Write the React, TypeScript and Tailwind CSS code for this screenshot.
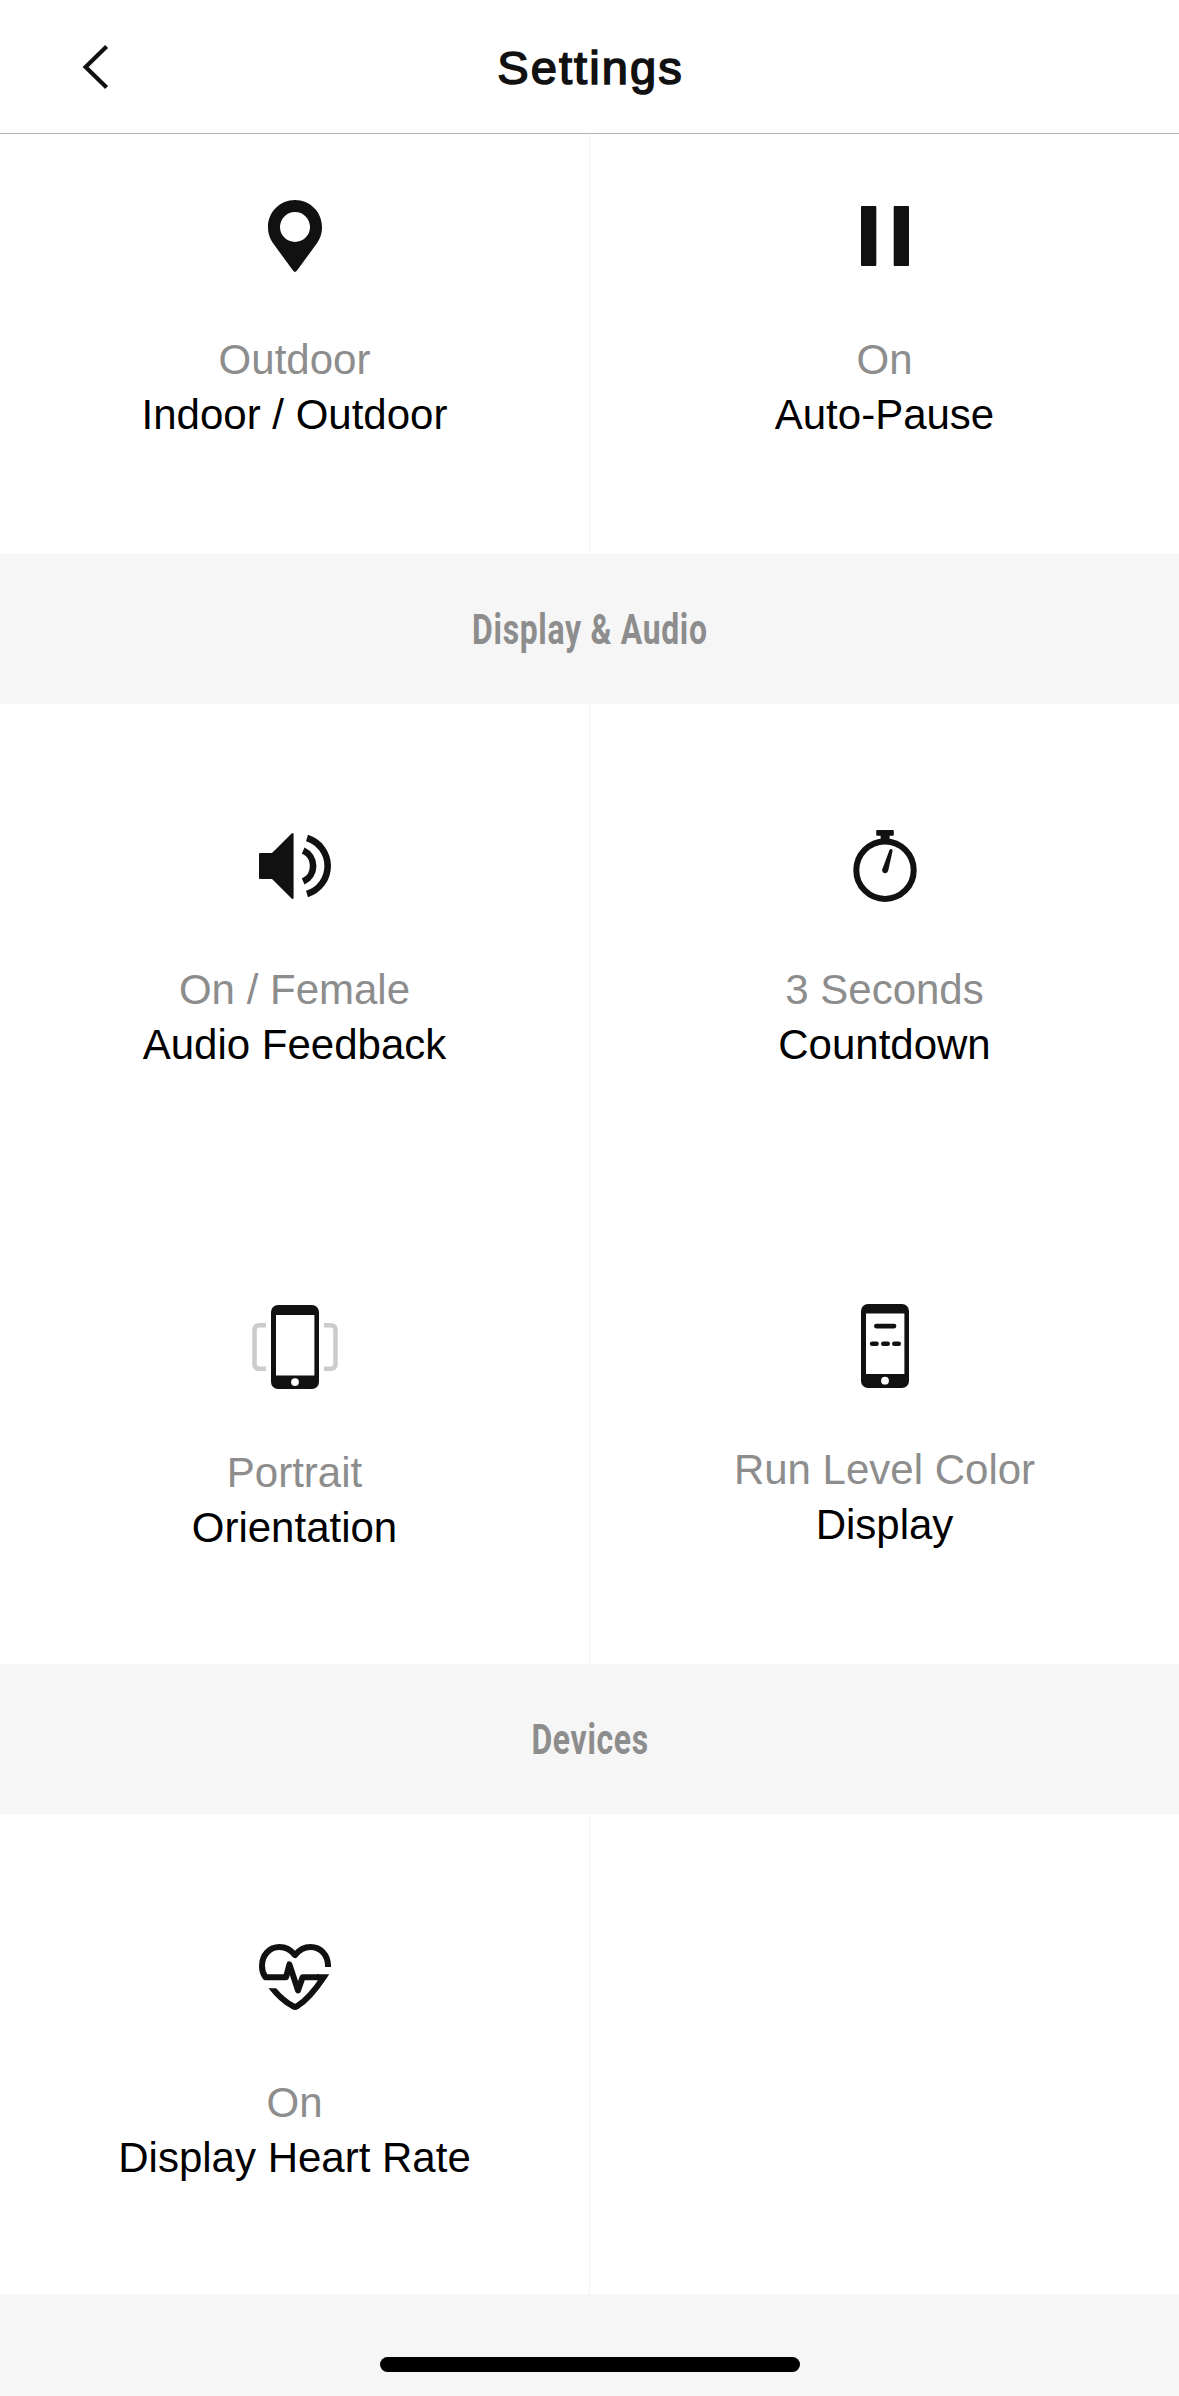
import type { ReactNode } from "react";

const INK = "#111111";

function PinIcon() {
  return (
    <svg width="54" height="72" viewBox="0 0 54 72" fill={INK}>
      <path
        fillRule="evenodd"
        d="M27 0C12 0 0 12 0 27C0 34 1.8 38.6 5.6 44L25 70.6Q27 73.2 29 70.6L48.4 44C52.2 38.6 54 34 54 27C54 12 42 0 27 0ZM27 12A15 15 0 1 1 27 42A15 15 0 1 1 27 12Z"
      />
    </svg>
  );
}

function PauseIcon() {
  return (
    <svg width="48" height="60" viewBox="0 0 48 60" fill={INK}>
      <rect x="0" y="0" width="15.3" height="60" rx="1" />
      <rect x="32.7" y="0" width="15.3" height="60" rx="1" />
    </svg>
  );
}

function SpeakerIcon() {
  return (
    <svg width="72" height="72" viewBox="0 0 72 72" fill="none">
      <path
        d="M1 23H13L32.6 3.6Q34.6 2.2 34.6 4.6V67.4Q34.6 69.8 32.6 68.4L13 49H1Q0 49 0 48V24Q0 23 1 23Z"
        fill={INK}
      />
      <path d="M44.2 20.4A17.2 17.2 0 0 1 44.2 51.6" stroke={INK} strokeWidth="6.6" />
      <path d="M48 8A29.3 29.3 0 0 1 48 64" stroke={INK} strokeWidth="6.6" />
    </svg>
  );
}

function StopwatchIcon() {
  return (
    <svg width="72" height="72" viewBox="0 0 72 72" fill="none">
      <circle cx="36" cy="40.2" r="28.7" stroke={INK} strokeWidth="6" />
      <rect x="27.2" y="0" width="17.6" height="5.8" rx="1" fill={INK} />
      <rect x="31.6" y="4" width="9" height="7" fill={INK} />
      <path
        d="M40.4 20.2Q41 18.8 42.4 19.1Q43.8 19.6 43.5 21L39.2 40.8Q38.4 43.6 35.8 43.2Q32.8 42.6 33.2 39.6Z"
        fill={INK}
      />
    </svg>
  );
}

function OrientationIcon() {
  return (
    <svg width="86" height="84" viewBox="0 0 86 84" fill="none">
      <path d="M14 20.2H7.5Q2.5 20.2 2.5 25.2V58.8Q2.5 63.8 7.5 63.8H14" stroke="#cccccc" strokeWidth="4.6" />
      <path d="M72 20.2H78.5Q83.5 20.2 83.5 25.2V58.8Q83.5 63.8 78.5 63.8H72" stroke="#cccccc" strokeWidth="4.6" />
      <path
        fillRule="evenodd"
        fill={INK}
        d="M26 0H60A7 7 0 0 1 67 7V77A7 7 0 0 1 60 84H26A7 7 0 0 1 19 77V7A7 7 0 0 1 26 0ZM24 10V70.6H62.4V10ZM43 73.2A3.9 3.9 0 1 0 43 81A3.9 3.9 0 1 0 43 73.2Z"
      />
    </svg>
  );
}

function DisplayIcon() {
  return (
    <svg width="48" height="84" viewBox="0 0 48 84" fill="none">
      <path
        fillRule="evenodd"
        fill={INK}
        d="M7 0H41A7 7 0 0 1 48 7V77A7 7 0 0 1 41 84H7A7 7 0 0 1 0 77V7A7 7 0 0 1 7 0ZM5 9.4V70H43.4V9.4ZM24 72.8A3.9 3.9 0 1 0 24 80.6A3.9 3.9 0 1 0 24 72.8Z"
      />
      <g fill={INK}>
        <rect x="13" y="19.8" width="22.4" height="4.6" rx="2.3" />
        <rect x="8.8" y="37.4" width="9" height="4.6" rx="2.3" />
        <rect x="20" y="37.4" width="9" height="4.6" rx="2.3" />
        <rect x="31" y="37.4" width="9" height="4.6" rx="2.3" />
      </g>
    </svg>
  );
}

function HeartRateIcon() {
  return (
    <svg width="72" height="66" viewBox="0 0 72 66" fill="none" stroke={INK} strokeWidth="6">
      <defs>
        <clipPath id="heart-tail">
          <rect x="0" y="44.2" width="72" height="22" />
        </clipPath>
      </defs>
      <path
        strokeLinejoin="round"
        d="M69 23C69.4 11 61.5 3 51.5 3C45 3 40 6 36 11.2C32 6 27 3 20.5 3C10.5 3 3 11 3 22C3 26.5 4.4 30.5 6.4 33.3H27L30.4 20.4L39 46.4L43.6 33.3H60"
      />
      <path strokeLinejoin="miter" d="M58 33.3H64.6C57.5 44 47.5 56.5 38 62.2Q36 63.4 34 62.2" />
      <path clipPath="url(#heart-tail)" d="M10 40C17 49.5 25 57.5 34 62.2Q36 63.4 38 62.2" />
    </svg>
  );
}

type CellProps = {
  icon: ReactNode;
  value: string;
  label: string;
  lowered?: boolean;
};

function SettingCell({ icon, value, label, lowered = false }: CellProps) {
  return (
    <button
      type="button"
      className={
        lowered
          ? "flex h-[480px] flex-col items-center gap-[56px] pt-[121px]"
          : "flex h-[480px] flex-col items-center gap-[54px] pt-[120px]"
      }
    >
      <span className="flex h-[84px] items-center justify-center">{icon}</span>
      <span className="flex flex-col items-center text-[42px] leading-[55px] whitespace-nowrap">
        <span className="text-[#8d8d8d]">{value}</span>
        <span className="text-black">{label}</span>
      </span>
    </button>
  );
}

function SettingRows({ children }: { children: ReactNode }) {
  return <div className="grid grid-cols-[589px_1px_589px]">{children}</div>;
}

function Divider() {
  return <div className="bg-[#f5f5f5]" />;
}

function SectionTitle({ children }: { children: ReactNode }) {
  return (
    <h2 className="flex h-[150px] shrink-0 items-center justify-center bg-[#f6f6f6] pt-0.5 font-[Roboto,sans-serif] text-[42px] leading-[50px] font-bold text-[#8d8d8d]">
      <span className="inline-block scale-x-[0.76] pl-px tracking-[0.9px] whitespace-nowrap">{children}</span>
    </h2>
  );
}

export default function App() {
  return (
    <div className="flex h-[2396px] w-[1179px] flex-col overflow-hidden bg-white font-['Liberation_Sans',Arial,sans-serif]">
      <header className="z-10 grid h-[134px] shrink-0 grid-cols-[1fr_auto_1fr] items-center border-b border-[#b2b2b2] bg-white">
        <button type="button" aria-label="Back" className="ml-[82px] w-7">
          <svg width="28" height="46" viewBox="0 0 28 46" fill="none" stroke={INK} strokeWidth="4.2">
            <path d="M24.6 2.4L3.6 23L24.6 43.6" />
          </svg>
        </button>
        <h1 className="pt-[3px] pl-[2px] text-[47px] leading-[54px] tracking-[2.1px] text-[#111111] [-webkit-text-stroke:1.6px_#111111]">
          Settings
        </h1>
      </header>

      <main className="flex flex-col">
        <div className="-mt-[60px]">
          <SettingRows>
            <SettingCell icon={<PinIcon />} value="Outdoor" label="Indoor / Outdoor" />
            <Divider />
            <SettingCell icon={<PauseIcon />} value="On" label="Auto-Pause" />
          </SettingRows>
        </div>

        <SectionTitle>Display &amp; Audio</SectionTitle>
        <SettingRows>
          <SettingCell icon={<SpeakerIcon />} value="On / Female" label="Audio Feedback" />
          <Divider />
          <SettingCell icon={<StopwatchIcon />} value="3 Seconds" label="Countdown" />
          <SettingCell icon={<OrientationIcon />} value="Portrait" label="Orientation" lowered />
          <Divider />
          <SettingCell icon={<DisplayIcon />} value="Run Level Color" label="Display" />
        </SettingRows>

        <SectionTitle>Devices</SectionTitle>
        <SettingRows>
          <SettingCell icon={<HeartRateIcon />} value="On" label="Display Heart Rate" lowered />
          <Divider />
        </SettingRows>
      </main>

      <footer className="flex flex-1 items-end justify-center bg-[#f6f6f6] pb-6">
        <div className="h-[15px] w-[420px] rounded-full bg-black" />
      </footer>
    </div>
  );
}
